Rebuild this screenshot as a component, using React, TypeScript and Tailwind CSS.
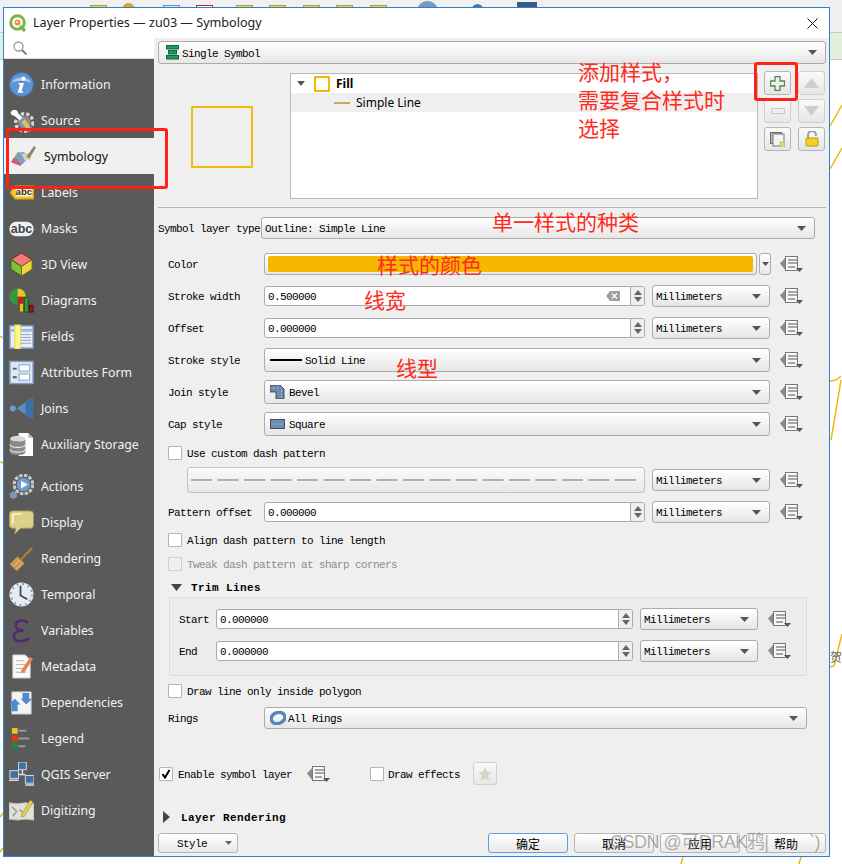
import React from "react";

const Tri = () => (
  <svg width="9" height="5" viewBox="0 0 9 5" className="shrink-0"><path d="M0 0h9L4.5 5z" fill="#555" /></svg>
);

const Combo = ({ className, children }: { className: string; children?: React.ReactNode }) => (
  <div className={`flex items-center rounded-[3px] border border-[#ababab] bg-gradient-to-b from-white to-[#e6e6e6] ${className}`}>
    <div className="flex flex-1 items-center min-w-0">{children}</div>
    <div className="mr-[8px]"><Tri /></div>
  </div>
);

const Spin = () => (
  <div className="flex h-full w-[14px] shrink-0 flex-col items-center justify-center gap-[2px] rounded-r-[3px] border-l border-[#ababab] bg-[#efefef]">
    <svg width="8" height="5" viewBox="0 0 8 5"><path d="M4 0l4 5H0z" fill="#666" /></svg>
    <svg width="8" height="5" viewBox="0 0 8 5"><path d="M0 0h8L4 5z" fill="#666" /></svg>
  </div>
);

const NumInput = ({ className, value, clear }: { className: string; value: string; clear?: boolean }) => (
  <div className={`flex h-[20px] items-center rounded-[3px] border border-[#ababab] bg-white ${className}`}>
    <span className="flex-1 pl-[3px]">{value}</span>
    {clear && (
      <svg width="14" height="10" viewBox="0 0 14 10" className="mr-[10px]">
        <path d="M4 0h10v10H4L0 5z" fill="#a0a0a0" />
        <path d="M6 2.5l5 5M11 2.5l-5 5" stroke="#fff" strokeWidth="1.3" />
      </svg>
    )}
    <Spin />
  </div>
);

const DD = ({ className = "" }: { className?: string }) => (
  <svg width="24" height="18" viewBox="0 0 24 18" className={`shrink-0 ${className}`}>
    <path d="M0 8.5L6 2v14z" fill="#8a8a8a" />
    <rect x="5.5" y="1.5" width="12" height="14" fill="#f7f7f7" stroke="#777" />
    <path d="M8 5h9M8 8h9M8 12h7" stroke="#555" strokeWidth="1.2" />
    <path d="M16 13h7l-3.5 4z" fill="#555" />
  </svg>
);

const Unit = ({ className = "" }: { className?: string }) => (
  <Combo className={`h-[22px] w-[118px] shrink-0 ${className}`}><span className="pl-[3px]">Millimeters</span></Combo>
);

const Check = ({ checked, disabled }: { checked?: boolean; disabled?: boolean }) => (
  <div className={`flex h-[14px] w-[14px] shrink-0 items-center justify-center rounded-[1px] border ${disabled ? "border-[#cfcfcf] bg-[#efefef]" : "border-[#b5b5b5] bg-white"}`}>
    {checked && (
      <svg width="10" height="10" viewBox="0 0 10 10"><path d="M1.5 5l2.5 3.5L8.5 1" fill="none" stroke="#000" strokeWidth="2" /></svg>
    )}
  </div>
);

const Btn = ({ className = "", children }: { className?: string; children?: React.ReactNode }) => (
  <div className={`flex items-center justify-center rounded-[3px] border border-[#b4b4b4] bg-gradient-to-b from-[#fafafa] to-[#e6e6e6] ${className}`}>{children}</div>
);

const DialogBtn = ({ label, primary }: { label: string; primary?: boolean }) => (
  <div className={`flex h-[20px] w-[80px] items-center justify-center rounded-[3px] border bg-gradient-to-b from-white to-[#e8e8e8] pt-[2px] font-['Noto_Sans_CJK_SC',sans-serif] text-[12px] tracking-normal ${primary ? "border-[#5aa0e6]" : "border-[#b4b4b4]"}`}>{label}</div>
);

/* ---------- Sidebar icons ---------- */
const S = ({ children }: { children: React.ReactNode }) => (
  <svg width={25} height={25} viewBox="0 0 26 26" className="shrink-0">{children}</svg>
);

const icons: Record<string, React.ReactNode> = {
  Information: (
    <S>
      <circle cx="13" cy="13" r="12.5" fill="#5f93d3" stroke="#3f6fb0" />
      <path d="M3 11A11 9 0 0 1 23 11 18 10 0 0 0 3 11z" fill="#a9c8ec" />
      <circle cx="15" cy="7" r="2.2" fill="#fff" />
      <path d="M10 11.5h5.5L13 20h2l-.5 1.5H9L11.5 13H9.6z" fill="#fff" />
    </S>
  ),
  Source: (
    <S>
      <circle cx="16" cy="15" r="9" fill="none" stroke="#d5d5d5" strokeWidth="3.5" strokeDasharray="3.5 2" />
      <circle cx="16" cy="15" r="6.5" fill="#8f8f8f" />
      <path d="M2 4c2-3 6-3 7 0l1 2 9 9-3 3-9-9-2-1C3 8 1 6 2 4z" fill="#fff" />
      <path d="M11 13l3-3 10 11-2 4-4-1z" fill="#6d94c9" />
      <path d="M13 15l3-3 6 7-3 3z" fill="#e6c34f" />
    </S>
  ),
  Symbology: (
    <S>
      <path d="M1 18L7 8l6 3-5 10z" fill="#7ab86a" />
      <path d="M0 19l3-5 9 5-2 4z" fill="#cf5a7a" />
      <path d="M6 10l7-2 6 5-7 8-5-3z" fill="#7c9ec9" />
      <path d="M11 10l3 7 7-1-1-6z" fill="#d6d2b6" />
      <path d="M16 13L24 2l2 2-7 11z" fill="#97835f" />
    </S>
  ),
  Labels: (
    <S>
      <path d="M1 13l5-7h20v14H6z" fill="#f2c230" stroke="#a88a20" />
      <rect x="7" y="8" width="17" height="9" fill="#fff6c0" />
      <text x="15.5" y="16" textAnchor="middle" fontSize="10" fontWeight="700" fontFamily="Liberation Sans, sans-serif" fill="#333">abc</text>
    </S>
  ),
  Masks: (
    <S>
      <rect x="0.5" y="6" width="25" height="15" rx="7" fill="#eef0f5" />
      <text x="13" y="18" textAnchor="middle" fontSize="13" fontWeight="700" fontFamily="Liberation Sans, sans-serif" fill="#444">abc</text>
    </S>
  ),
  "3D View": (
    <S>
      <path d="M13 1l11 7-11 7L2 8z" fill="#f07a78" stroke="#7a2020" />
      <path d="M2 8l11 7v10L2 18z" fill="#7cc23a" stroke="#355a15" />
      <path d="M24 8l-11 7v10l11-7z" fill="#f2d640" stroke="#7a6a10" />
    </S>
  ),
  Diagrams: (
    <S>
      <circle cx="9" cy="9" r="8.5" fill="#2f9a3a" />
      <path d="M9 9V0.5A8.5 8.5 0 0 1 17.5 9z" fill="#e7c52f" />
      <path d="M9 9h8.5A8.5 8.5 0 0 1 9 17.5z" fill="#b82424" />
      <rect x="11" y="16" width="4" height="9" fill="#e7c52f" stroke="#6a5a10" />
      <rect x="16" y="10" width="4" height="15" fill="#2f9a3a" stroke="#1e5a20" />
      <rect x="21" y="18" width="4" height="7" fill="#8f1c1c" stroke="#501010" />
    </S>
  ),
  Fields: (
    <S>
      <rect x="1" y="2" width="24" height="23" fill="#e8eef7" stroke="#7fa0cb" strokeWidth="1.5" />
      <rect x="2" y="5" width="22" height="3" fill="#9fbbe0" />
      <path d="M11 11h12M11 14h12M11 17h12M11 20h12" stroke="#8ea4c2" />
      <rect x="6" y="1" width="6" height="25" fill="#fdf58e" stroke="#e7da3a" />
    </S>
  ),
  "Attributes Form": (
    <S>
      <rect x="1" y="1.5" width="24" height="23" fill="#dfe7f3" stroke="#7fa0cb" strokeWidth="1.5" />
      <path d="M4 9h4M4 18h4" stroke="#555" strokeWidth="2" />
      <rect x="10.5" y="5" width="11" height="6.5" fill="#fff" stroke="#7fa0cb" />
      <rect x="10.5" y="14.5" width="11" height="6.5" fill="#fff" stroke="#7fa0cb" />
    </S>
  ),
  Joins: (
    <S>
      <circle cx="4" cy="13" r="3" fill="#6f9bd1" />
      <path d="M8 13L25 1v24z" fill="#5e8cc4" />
      <path d="M25 1v24L17 19V7z" fill="#3f6fa8" />
    </S>
  ),
  "Auxiliary Storage": (
    <S>
      <path d="M10 1h10l5 5v19H10z" fill="#fff" />
      <path d="M20 1v5h5z" fill="#bbb" />
      <ellipse cx="9" cy="7" rx="8" ry="3" fill="#d8d8d8" />
      <path d="M1 7v14c0 4 16 4 16 0V7c0 4-16 4-16 0z" fill="#8a8a8a" />
      <path d="M1 13c0 4 16 4 16 0M1 18c0 4 16 4 16 0" stroke="#e5e5e5" fill="none" strokeWidth="1.2" />
    </S>
  ),
  Actions: (
    <S>
      <circle cx="15" cy="11" r="9.5" fill="none" stroke="#c8c8c8" strokeWidth="3.5" strokeDasharray="3.5 1.5" />
      <circle cx="15" cy="11" r="7.5" fill="#6f9bd1" stroke="#555" />
      <path d="M12.5 7l7 4-7 4z" fill="#fff" />
      <circle cx="4.5" cy="22" r="3" fill="#6f93c4" stroke="#aaa" strokeWidth="1.5" strokeDasharray="2 1" />
    </S>
  ),
  Display: (
    <S>
      <path d="M4 1h18q3.500 0 3.500 3.500v11q0 3.500-3.500 3.500H12l-6 6 1-6H4q-3.500 0-3.500-3.500v-11Q.5 1 4 1z" fill="#dcd08a" stroke="#a8985a" />
      <path d="M4 14V6q0-2 3-2h7" fill="none" stroke="#fffbe0" strokeWidth="1.5" />
    </S>
  ),
  Rendering: (
    <S>
      <path d="M1 19l8-8 7 7-8 8z" fill="#d8a866" stroke="#a87a3c" />
      <path d="M3 20l7-7M6 23l7-7" stroke="#a87a3c" />
      <path d="M12 13l11-12 2 2-12 12z" fill="#b0763a" />
    </S>
  ),
  Temporal: (
    <S>
      <circle cx="13" cy="13" r="12.500" fill="#e6ebf2" />
      <circle cx="13" cy="13" r="11" fill="none" stroke="#7f9fca" strokeWidth="2" strokeDasharray="2 3.800" />
      <path d="M12 4v10l7 4" fill="none" stroke="#444" strokeWidth="1.800" />
    </S>
  ),
  Variables: (
    <S>
      <path d="M20 5C15 1 7 2 7 7.500 7 11 10.500 13 15 13 9.500 13 5 15 5 19 5 25 15 26 21 21" fill="none" stroke="#53296f" strokeWidth="2.600" />
    </S>
  ),
  Metadata: (
    <S>
      <path d="M4 1h13l5 5v19H4z" fill="#fafafa" stroke="#ccc" />
      <path d="M7 7h9M7 11h11M7 15h8M7 19h11" stroke="#b5b5b5" />
      <path d="M13 17l9-14 3 2-9 14-3.500 1z" fill="#e8824a" />
    </S>
  ),
  Dependencies: (
    <S>
      <path d="M3 2h20v23H3z" fill="#f5f5f5" stroke="#ccc" />
      <path d="M14 3h7v6h3l-6 6-6-6h2z" fill="#4f8ad0" />
      <path d="M0 15l6-6 6 6H9v7H3v-7z" fill="#4f8ad0" />
    </S>
  ),
  Legend: (
    <S>
      <rect x="3" y="2" width="6" height="6" fill="#f5c020" />
      <rect x="3" y="10" width="6" height="6" fill="#e03a10" />
      <rect x="3" y="18" width="6" height="6" fill="#1e8a3e" />
      <path d="M10 5h8M10 13h11M10 21h7" stroke="#9a9a9a" strokeWidth="2" />
    </S>
  ),
  "QGIS Server": (
    <S>
      <rect x="10" y="0" width="8" height="8" fill="#3f6ea8" stroke="#ddd" />
      <rect x="1" y="9" width="9" height="8" fill="#3f6ea8" stroke="#ddd" />
      <rect x="17" y="14" width="9" height="8" fill="#3f6ea8" stroke="#ddd" />
      <path d="M14 8v6M10 13h7M0 19h10M17 24h9" stroke="#ddd" strokeWidth="1.500" />
    </S>
  ),
  Digitizing: (
    <S>
      <path d="M0 5l9 1 8-1 9 1v17l-9-1-8 1-9-1z" fill="#e0e0da" stroke="#bbb" />
      <path d="M3 9l5 5-4 5M11 12l5 5" stroke="#999" fill="none" strokeWidth="1.500" />
      <path d="M13 17l9-15 3 2-9 15-3 1z" fill="#e6cf50" stroke="#8a7a20" strokeWidth=".5" />
    </S>
  ),
};

const items: { label: string; cls: string }[] = [
  { label: "Information", cls: "h-[36px]" },
  { label: "Source", cls: "h-[36px]" },
  { label: "Symbology", cls: "h-[36px]" },
  { label: "Labels", cls: "h-[36px]" },
  { label: "Masks", cls: "h-[36px]" },
  { label: "3D View", cls: "h-[36px]" },
  { label: "Diagrams", cls: "h-[36px]" },
  { label: "Fields", cls: "h-[36px]" },
  { label: "Attributes Form", cls: "h-[36px]" },
  { label: "Joins", cls: "h-[36px]" },
  { label: "Auxiliary Storage", cls: "h-[36px] mb-[6px]" },
  { label: "Actions", cls: "h-[36px]" },
  { label: "Display", cls: "h-[36px]" },
  { label: "Rendering", cls: "h-[36px]" },
  { label: "Temporal", cls: "h-[36px]" },
  { label: "Variables", cls: "h-[36px]" },
  { label: "Metadata", cls: "h-[36px]" },
  { label: "Dependencies", cls: "h-[36px]" },
  { label: "Legend", cls: "h-[36px]" },
  { label: "QGIS Server", cls: "h-[36px]" },
  { label: "Digitizing", cls: "h-[36px]" },
];

const Sidebar = () => (
  <div className="flex w-[150px] shrink-0 flex-col bg-[#5a5a5a] font-['Noto_Sans',sans-serif] text-[12.3px]">
    <div className="flex h-[21px] items-center border-b border-[#d8d8d8] bg-white pl-[9px]">
      <svg width="14" height="14" viewBox="0 0 14 14"><circle cx="5.500" cy="5.500" r="4.500" fill="none" stroke="#999" strokeWidth="1.300" /><path d="M9 9l4.500 4.500" stroke="#777" strokeWidth="1.800" /></svg>
    </div>
    <div className="flex flex-col pt-[7px] [&_span]:relative [&_span]:top-[1px]">
      {items.map((it) =>
        it.label === "Symbology" ? (
          <div key={it.label} className="flex h-[36px] items-center gap-[8px] bg-[#f0f0f0] pl-[7px] text-[#111]">
            {icons[it.label]}
            <span>{it.label}</span>
          </div>
        ) : (
          <div key={it.label} className={`flex items-center gap-[7px] pl-[5px] text-[#f2f2f2] ${it.cls}`}>
            {icons[it.label]}
            <span>{it.label}</span>
          </div>
        )
      )}
    </div>
  </div>
);

const Panel = () => (
  <div className="flex min-w-0 flex-1 flex-col bg-[#efefef] font-['Liberation_Mono',monospace] text-[11px] tracking-[-0.6px] text-black [&_span]:relative [&_span]:top-[1px]">
    {/* Renderer */}
    <Combo className="ml-[4px] mt-[3px] h-[23px] w-[668px] shrink-0">
      <svg width="13" height="15" viewBox="0 0 13 15" className="ml-[7px] mr-[3px]">
        <rect x="0.500" y="0.500" width="12" height="3.500" fill="#1f9a5a" stroke="#0c6a3c" />
        <rect x="2.500" y="5.500" width="8" height="3.500" fill="#1f9a5a" stroke="#0c6a3c" />
        <rect x="0.500" y="10.500" width="12" height="3.500" fill="#1f9a5a" stroke="#0c6a3c" />
      </svg>
      <span className="pt-[2px]">Single Symbol</span>
    </Combo>

    {/* Symbol tree */}
    <div className="mt-[7px] flex h-[128px] shrink-0">
      <div className="w-[136px] shrink-0 pl-[37px] pt-[35px]">
        <div className="h-[62px] w-[62px] rounded-[1px] border-2 border-[#f5b90a]" />
      </div>
      <div className="mt-[2px] flex h-[126px] w-[468px] shrink-0 flex-col border border-[#b8b8b8] bg-white font-['Noto_Sans',sans-serif] text-[12px] tracking-normal [&_span]:top-0!">
        <div className="flex h-[19px] items-center pl-[6px]">
          <svg width="8" height="5" viewBox="0 0 8 5"><path d="M0 0h8L4 5z" fill="#555" /></svg>
          <div className="ml-[9px] h-[16px] w-[16px] border-2 border-[#f5b90a]" />
          <span className="ml-[6px] font-bold">Fill</span>
        </div>
        <div className="flex h-[19px] items-center bg-[#efefef] pl-[43px]">
          <div className="h-[2px] w-[16px] bg-[#c4ad5c]" />
          <span className="ml-[6px]">Simple Line</span>
        </div>
      </div>
      <div className="ml-[6px] grid h-[80px] grid-cols-[27px_27px] grid-rows-[24px_24px_24px] gap-x-[7px] gap-y-[4px]">
        <Btn>
          <svg width="15" height="15" viewBox="0 0 15 15"><path d="M5 .5h5v4.500h4.500v5H10v4.500H5V10H.5V5H5z" fill="#e9f3e6" stroke="#4d8a55" strokeWidth="1.300" /></svg>
        </Btn>
        <Btn className="border-[#cfcfcf]">
          <svg width="15" height="10" viewBox="0 0 15 10"><path d="M7.500 0L15 10H0z" fill="#cdcdcd" /></svg>
        </Btn>
        <Btn className="border-[#cfcfcf]">
          <div className="h-[6px] w-[14px] border border-[#d0c8c8] bg-[#f0eaea]" />
        </Btn>
        <Btn className="border-[#cfcfcf]">
          <svg width="15" height="10" viewBox="0 0 15 10"><path d="M0 0h15L7.500 10z" fill="#cdcdcd" /></svg>
        </Btn>
        <Btn>
          <svg width="15" height="15" viewBox="0 0 15 15"><rect x="0.500" y="0.500" width="11" height="11" fill="#bbb" stroke="#666" /><rect x="3" y="2" width="11" height="12" fill="#f3f3f3" stroke="#777" /><rect x="10" y="10" width="5" height="5" fill="#e8d47a" stroke="#b59a30" strokeWidth=".5" /></svg>
        </Btn>
        <Btn>
          <svg width="14" height="16" viewBox="0 0 14 16"><path d="M3 7V4a4 4 0 0 1 8 0v1" fill="none" stroke="#999" strokeWidth="1.800" /><rect x="1" y="7" width="12" height="8" rx="1" fill="#f3d21f" stroke="#b49a10" /></svg>
        </Btn>
      </div>
    </div>

    <div className="ml-[4px] mt-[8px] h-[1px] w-[668px] shrink-0 bg-[#b5b5b5]" />

    {/* Symbol layer type */}
    <div className="mt-[9px] flex h-[22px] shrink-0 items-center pl-[4px]">
      <span className="w-[103px] shrink-0 whitespace-nowrap">Symbol layer type</span>
      <Combo className="h-[22px] w-[554px]"><span className="pl-[3px]">Outline: Simple Line</span></Combo>
    </div>

    {/* Color */}
    <div className="mt-[14px] flex h-[22px] shrink-0 items-center pl-[14px]">
      <span className="w-[96px] shrink-0">Color</span>
      <div className="flex h-[22px] w-[493px] items-center rounded-[3px] border border-[#ababab] bg-gradient-to-b from-white to-[#e8e8e8] px-[3px]">
        <div className="h-[16px] w-full rounded-[2px] bg-[#f5b700]" />
      </div>
      <div className="ml-[2px] flex h-[22px] w-[12px] items-center justify-center rounded-[3px] border border-[#ababab] bg-gradient-to-b from-white to-[#e8e8e8]">
        <svg width="7" height="4" viewBox="0 0 7 4"><path d="M0 0h7L3.500 4z" fill="#555" /></svg>
      </div>
      <DD className="ml-[9px]" />
    </div>

    {/* Stroke width */}
    <div className="mt-[10px] flex h-[22px] shrink-0 items-center pl-[14px]">
      <span className="w-[96px] shrink-0">Stroke width</span>
      <NumInput className="w-[381px]" value="0.500000" clear />
      <Unit className="ml-[7px]" />
      <DD className="ml-[10px]" />
    </div>

    {/* Offset */}
    <div className="mt-[10px] flex h-[22px] shrink-0 items-center pl-[14px]">
      <span className="w-[96px] shrink-0">Offset</span>
      <NumInput className="w-[381px]" value="0.000000" />
      <Unit className="ml-[7px]" />
      <DD className="ml-[10px]" />
    </div>

    {/* Stroke style */}
    <div className="mt-[9px] flex h-[24px] shrink-0 items-center pl-[14px]">
      <span className="w-[96px] shrink-0">Stroke style</span>
      <Combo className="h-[24px] w-[506px]">
        <div className="ml-[5px] mr-[3px] h-[2px] w-[32px] bg-black" />
        <span>Solid Line</span>
      </Combo>
      <DD className="ml-[10px]" />
    </div>

    {/* Join style */}
    <div className="mt-[8px] flex h-[24px] shrink-0 items-center pl-[14px]">
      <span className="w-[96px] shrink-0">Join style</span>
      <Combo className="h-[24px] w-[506px]">
        <svg width="15" height="14" viewBox="0 0 15 14" className="ml-[5px] mr-[4px]">
          <path d="M0 0h10l4 4v10H6V7H0z" fill="#6a8cbc" stroke="#333" strokeWidth=".8" />
          <path d="M3 3h1M7 3h1M11 6h1M11 9h1M11 12h1" stroke="#e0c030" strokeWidth="1.500" />
        </svg>
        <span>Bevel</span>
      </Combo>
      <DD className="ml-[10px]" />
    </div>

    {/* Cap style */}
    <div className="mt-[8px] flex h-[24px] shrink-0 items-center pl-[14px]">
      <span className="w-[96px] shrink-0">Cap style</span>
      <Combo className="h-[24px] w-[506px]">
        <svg width="15" height="10" viewBox="0 0 15 10" className="ml-[5px] mr-[4px]">
          <rect x=".5" y=".5" width="14" height="9" fill="#6a8cbc" stroke="#333" strokeWidth=".8" />
          <path d="M5 5h1M8 5h1M11 5h1" stroke="#e0c030" strokeWidth="1.500" />
        </svg>
        <span>Square</span>
      </Combo>
      <DD className="ml-[10px]" />
    </div>

    {/* Custom dash */}
    <div className="mt-[10px] flex h-[14px] shrink-0 items-center gap-[5px] pl-[14px]">
      <Check />
      <span>Use custom dash pattern</span>
    </div>
    <div className="mt-[7px] flex h-[26px] shrink-0 items-center pl-[33px]">
      <div className="flex h-[26px] w-[458px] items-center rounded-[3px] border border-[#c4c4c4] bg-gradient-to-b from-[#fafafa] to-[#e8e8e8] pl-[3px]">
        <svg width="450" height="4" viewBox="0 0 450 4"><path d="M0 2H450" stroke="#b0b0b0" strokeWidth="2" strokeDasharray="21 5.500" /></svg>
      </div>
      <Unit className="ml-[7px]" />
      <DD className="ml-[10px]" />
    </div>

    {/* Pattern offset */}
    <div className="mt-[8px] flex h-[22px] shrink-0 items-center pl-[14px]">
      <span className="w-[96px] shrink-0">Pattern offset</span>
      <NumInput className="w-[381px]" value="0.000000" />
      <Unit className="ml-[7px]" />
      <DD className="ml-[10px]" />
    </div>

    <div className="mt-[10px] flex h-[14px] shrink-0 items-center gap-[5px] pl-[14px]">
      <Check />
      <span>Align dash pattern to line length</span>
    </div>
    <div className="mt-[10px] flex h-[14px] shrink-0 items-center gap-[5px] pl-[14px] text-[#8c8c8c]">
      <Check disabled />
      <span>Tweak dash pattern at sharp corners</span>
    </div>

    {/* Trim lines */}
    <div className="mt-[9px] flex h-[14px] shrink-0 items-center pl-[17px] font-bold tracking-[0.4px]">
      <svg width="11" height="7" viewBox="0 0 11 7"><path d="M0 0h11L5.500 7z" fill="#444" /></svg>
      <span className="ml-[9px]">Trim Lines</span>
    </div>
    <div className="ml-[15px] mt-[3px] flex h-[79px] w-[638px] shrink-0 flex-col rounded-[2px] border border-[#dcdcdc] bg-[#ececec] pl-[9px] pt-[10px]">
      <div className="flex h-[22px] items-center">
        <span className="w-[37px] shrink-0">Start</span>
        <NumInput className="w-[417px]" value="0.000000" />
        <Unit className="ml-[7px]" />
        <DD className="ml-[10px]" />
      </div>
      <div className="mt-[10px] flex h-[22px] items-center">
        <span className="w-[37px] shrink-0">End</span>
        <NumInput className="w-[417px]" value="0.000000" />
        <Unit className="ml-[7px]" />
        <DD className="ml-[10px]" />
      </div>
    </div>

    <div className="mt-[8px] flex h-[14px] shrink-0 items-center gap-[5px] pl-[14px]">
      <Check />
      <span>Draw line only inside polygon</span>
    </div>

    {/* Rings */}
    <div className="mt-[9px] flex h-[22px] shrink-0 items-center pl-[14px]">
      <span className="w-[96px] shrink-0">Rings</span>
      <Combo className="h-[22px] w-[543px]">
        <svg width="16" height="14" viewBox="0 0 16 14" className="ml-[5px] mr-[2px]">
          <ellipse cx="8" cy="7" rx="7" ry="5.500" fill="none" stroke="#5a86bc" strokeWidth="3.500" transform="rotate(-20 8 7)" />
        </svg>
        <span>All Rings</span>
      </Combo>
    </div>

    {/* Enable */}
    <div className="mt-[33px] flex h-[23px] shrink-0 items-center pl-[5px]">
      <Check checked />
      <span className="ml-[5px] w-[129px] shrink-0 pt-[2px]">Enable symbol layer</span>
      <DD />
      <div className="ml-[39px]"><Check /></div>
      <span className="ml-[4px] w-[85px] shrink-0 pt-[2px]">Draw effects</span>
      <Btn className="h-[23px] w-[24px] border-[#d0d0d0]">
        <svg width="14" height="14" viewBox="0 0 14 14"><path d="M7 0l2 5 5 .3-3.900 3.200L11.400 14 7 11l-4.400 3 1.300-5.500L0 5.300 5 5z" fill="#d6d2c4" /></svg>
      </Btn>
    </div>

    {/* Layer Rendering */}
    <div className="mt-[25px] flex h-[14px] shrink-0 items-center pl-[9px] font-bold tracking-[0.4px]">
      <svg width="7" height="12" viewBox="0 0 7 12"><path d="M0 0l7 6-7 6z" fill="#444" /></svg>
      <span className="ml-[11px]">Layer Rendering</span>
    </div>

    {/* Footer */}
    <div className="mt-[9px] flex h-[20px] shrink-0 items-center pl-[4px] pr-[3px]">
      <div className="flex h-[20px] w-[80px] items-center rounded-[3px] border border-[#b4b4b4] bg-gradient-to-b from-white to-[#e8e8e8] pl-[18px]">
        <span className="flex-1">Style</span>
        <svg width="7" height="4" viewBox="0 0 7 4" className="mr-[5px]"><path d="M0 0h7L3.500 4z" fill="#666" /></svg>
      </div>
      <div className="ml-auto flex gap-[6px]">
        <DialogBtn label="确定" primary />
        <DialogBtn label="取消" />
        <DialogBtn label="应用" />
        <DialogBtn label="帮助" />
      </div>
    </div>
  </div>
);

const TopIcon = ({ className }: { className: string }) => <div className={`h-[6px] w-[17px] shrink-0 border border-b-0 ${className}`} />;

export default function App() {
  return (
    <div className="relative h-[864px] w-[842px] overflow-hidden bg-white">
      {/* Application behind the dialog */}
      <div className="flex h-[33px] items-start border-b border-[#c8c8c8] bg-[#f0f0f0] pl-[90px] pt-[5px]">
        <TopIcon className="border-[#b59a20] bg-[#f5d94a]" />
        <div className="ml-[15px] mt-[-2px] h-[8px] w-[13px] rounded-t-full bg-[#e0a020]" />
        <TopIcon className="ml-[28px] border-[#5a90d0] bg-[#dfeaf7]" />
        <TopIcon className="ml-[16px] border-[#d02020] bg-white" />
        <TopIcon className="ml-[23px] border-[#b59a20] bg-[#f5d94a]" />
        <TopIcon className="ml-[16px] border-[#b59a20] bg-[#f5d94a]" />
        <TopIcon className="ml-[17px] border-[#b59a20] bg-[#f5d94a]" />
        <TopIcon className="ml-[16px] border-[#b59a20] bg-[#f5d94a]" />
        <TopIcon className="ml-[17px] border-[#b59a20] bg-[#f5d94a]" />
        <div className="ml-[30px] mt-[-4px] h-[10px] w-[21px] rounded-t-full bg-[#7a9ac0]" />
        <div className="ml-[34px] mt-[-1px] h-[7px] w-[11px] rounded-t-full bg-[#4a74a8]" />
        <div className="ml-[34px] mt-[-3px] h-[9px] w-[20px] bg-[#3a5a80]" />
      </div>
      <div className="h-[27px] border-b border-[#c8c8c8] bg-[#e2f0da]" />

      {/* Map lines behind the dialog */}
      <svg width="842" height="864" viewBox="0 0 842 864" className="absolute left-0 top-0">
        <g fill="none" stroke="#f5b300" strokeWidth="1.500">
          <path d="M830 126L842 105M830 169L842 148M830 381L836 380 841 376M841 380L831 440M830 667L834 666 842 634" />
          <path d="M0 336L3 338M0 462L3 463M0 817L3 813M0 852L3 848M683 857L681 864M801 857L799 864" />
        </g>
      </svg>
      <span className="absolute left-[830px] top-[648px] font-['Noto_Sans_CJK_SC',sans-serif] text-[12px] text-[#666]">贺</span>

      {/* Dialog */}
      <div className="absolute left-[3px] top-[7px] flex h-[850px] w-[827px] flex-col border border-[#2a82d8] bg-white">
        <div className="flex h-[30px] shrink-0 items-center bg-white pl-[5px] font-['Noto_Sans',sans-serif] text-[12.600px] text-[#222]">
          <svg width="18" height="18" viewBox="0 0 18 18" className="mr-[6px]">
            <circle cx="8.500" cy="8.500" r="6.800" fill="none" stroke="#7ab648" strokeWidth="3" />
            <path d="M11 12l5 5" stroke="#7ab648" strokeWidth="3.200" />
            <circle cx="8.500" cy="8.500" r="3" fill="#ef8a3a" />
            <circle cx="8" cy="8" r="1" fill="#fff" />
          </svg>
          <span>Layer Properties — zu03 — Symbology</span>
          <svg width="11" height="11" viewBox="0 0 11 11" className="ml-auto mr-[11px]"><path d="M.5.5l10 10M10.500.5l-10 10" stroke="#111" strokeWidth="1" /></svg>
        </div>
        <div className="flex min-h-0 flex-1">
          <Sidebar />
          <Panel />
        </div>
      </div>

      {/* Annotations */}
      <div className="absolute left-[6px] top-[128px] h-[61px] w-[162px] rounded-[3px] border-[3px] border-[#ff2018]" />
      <div className="absolute left-[754px] top-[62px] h-[39px] w-[44px] rounded-[3px] border-[3px] border-[#ff2018]" />
      <div className="absolute left-[578px] top-[57px] font-['Noto_Sans_CJK_SC',sans-serif] text-[21px] leading-[28px] text-[#ff2a20]">
        添加样式，<br />需要复合样式时<br />选择
      </div>
      <span className="absolute left-[492px] top-[207px] font-['Noto_Sans_CJK_SC',sans-serif] text-[21px] leading-[28px] text-[#ff2a20]">单一样式的种类</span>
      <span className="absolute left-[377px] top-[250px] font-['Noto_Sans_CJK_SC',sans-serif] text-[21px] leading-[28px] text-[#ff2a20]">样式的颜色</span>
      <span className="absolute left-[364px] top-[285px] font-['Noto_Sans_CJK_SC',sans-serif] text-[21px] leading-[28px] text-[#ff2a20]">线宽</span>
      <span className="absolute left-[396px] top-[353px] font-['Noto_Sans_CJK_SC',sans-serif] text-[21px] leading-[28px] text-[#ff2a20]">线型</span>

      {/* Watermark */}
      <span className="absolute left-[610px] top-[828px] whitespace-pre font-['Liberation_Sans','Noto_Sans_CJK_SC',sans-serif] text-[18px] leading-[28px] tracking-[-0.5px] text-[#7a7a7a]/60">{"CSDN @可DRAK鸦|         `)"}</span>
    </div>
  );
}
